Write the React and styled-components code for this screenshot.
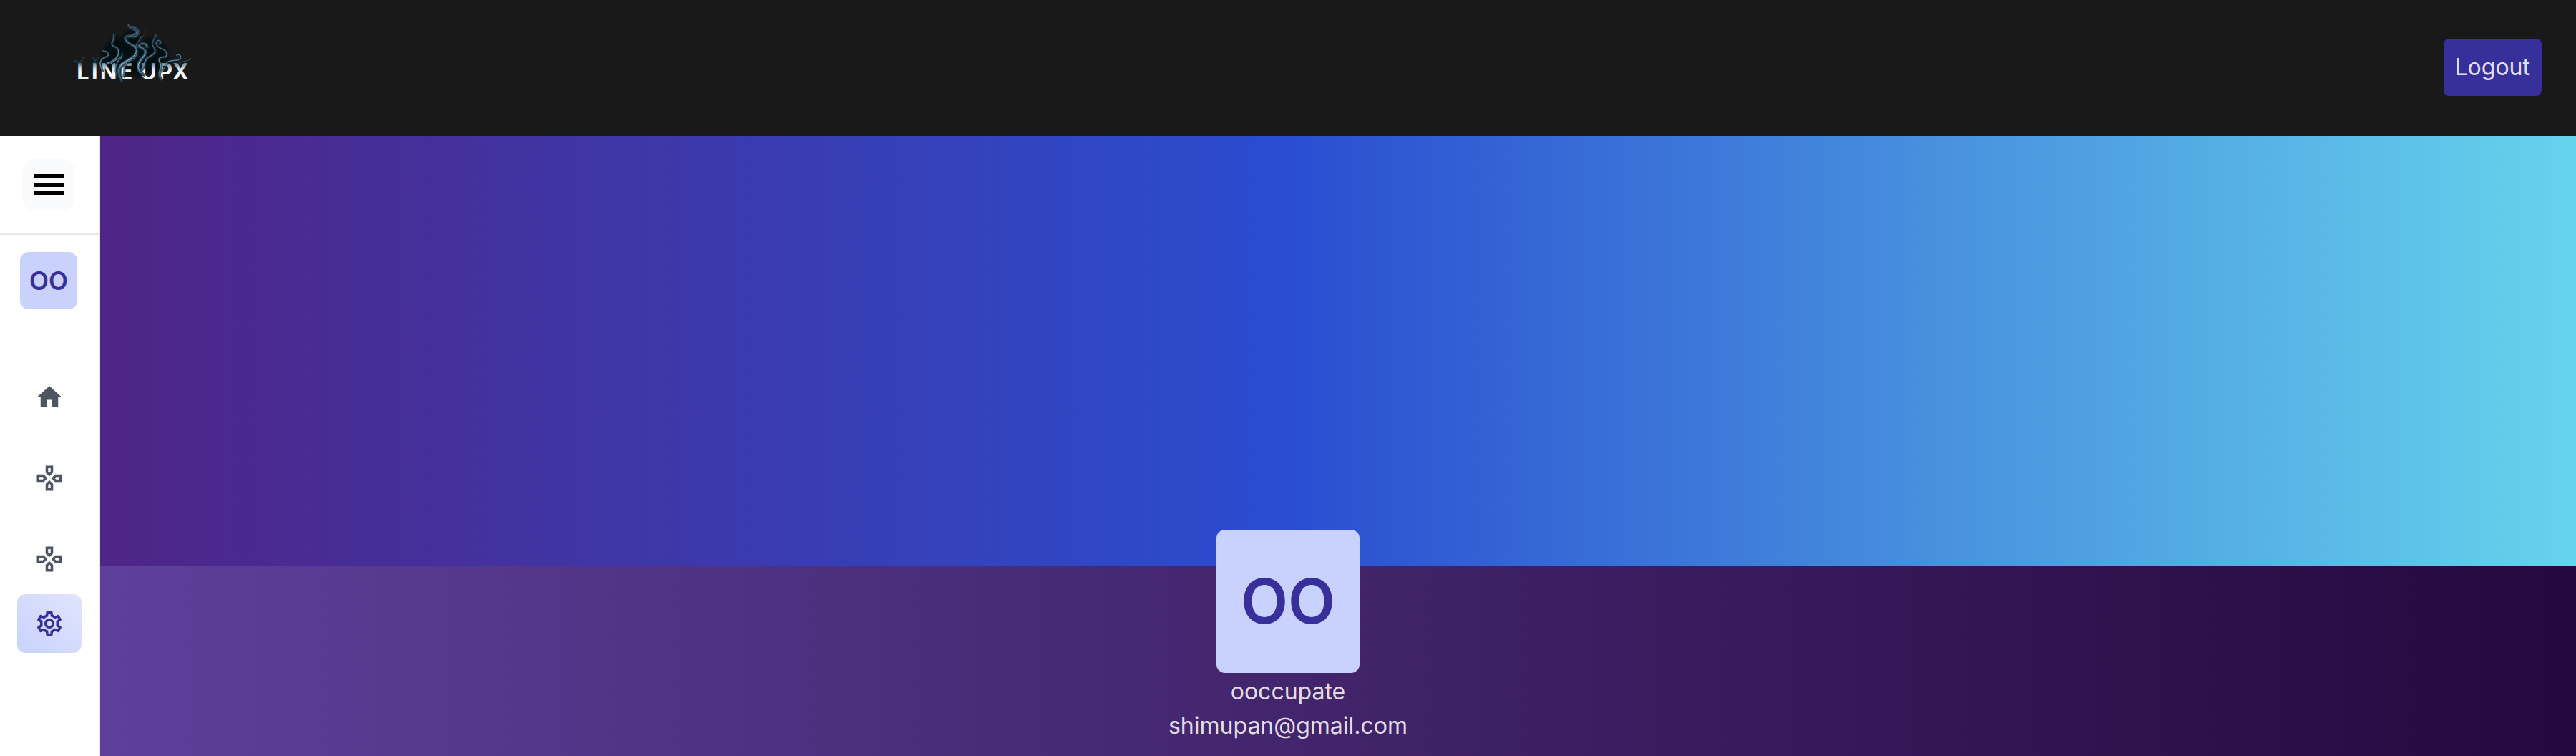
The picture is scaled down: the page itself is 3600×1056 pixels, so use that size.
import React from "react";
import styled, { createGlobalStyle } from "styled-components";
import { MdHome, MdOutlineGamepad, MdOutlineSettings } from "react-icons/md";

const GlobalStyle = createGlobalStyle`
  *, *::before, *::after { box-sizing: border-box; }
  body {
    margin: 0;
    background: #191919;
    color: rgba(255, 255, 255, 0.87);
    font-family: Inter, "Liberation Sans", sans-serif;
    font-size: 32px;
    line-height: 48px;
  }
`;

const Page = styled.div`
  display: flex;
  flex-direction: column;
  min-height: 100vh;
`;

const Header = styled.header`
  display: flex;
  align-items: center;
  justify-content: space-between;
  min-height: 190px;
  padding: 0 48px 0 90px;
  background: #191919;
`;

const LogoLink = styled.a`
  display: block;
  margin-bottom: 40px;
  svg { display: block; }
`;

const LogoutButton = styled.button`
  margin-bottom: 2px;
  padding: 16px;
  border: 0;
  border-radius: 8px;
  background: #37309b;
  color: rgba(255, 255, 255, 0.87);
  font: inherit;
  cursor: pointer;
`;

const Body = styled.div`
  position: relative;
  display: flex;
  flex: 1;
`;

/* The sidebar floats over the profile, which keeps the full page width. */
const Sidebar = styled.aside`
  position: absolute;
  inset: 0 auto 0 0;
  width: 140px;
  display: flex;
  flex-direction: column;
  background: #fff;
  border-right: 2px solid #e5e7eb;
`;

const SidebarTop = styled.div`
  display: flex;
  justify-content: center;
  padding: 32px 2px 32px 0;
  border-bottom: 2px solid #e5e7eb;
`;

const MenuButton = styled.button`
  display: flex;
  align-items: center;
  justify-content: center;
  width: 72px;
  height: 72px;
  padding: 0;
  border: 0;
  border-radius: 16px;
  background: #f9fafc;
  cursor: pointer;
`;

const SidebarUser = styled.div`
  display: flex;
  justify-content: center;
  padding: 24px 2px 82px 0;
`;

const Avatar = styled.div`
  display: flex;
  align-items: center;
  justify-content: center;
  width: ${(p) => (p.$large ? 200 : 80)}px;
  height: ${(p) => (p.$large ? 200 : 80)}px;
  border-radius: 12px;
  background: #c8d2fc;
  color: #37309b;
  font-size: ${(p) => (p.$large ? 86 : 35)}px;
  font-weight: 600;
  line-height: 1;
`;

const NavList = styled.nav`
  display: flex;
  flex-direction: column;
  gap: 31px;
  padding: 0 24px 8px;
`;

const NavFooter = styled.div`
  padding: 0 24px;
`;

const NavItem = styled.a`
  display: flex;
  align-items: center;
  justify-content: center;
  height: 82px;
  border-radius: 12px;
  color: ${(p) => (p.$active ? "#37309b" : "#4d5563")};
  background: ${(p) => (p.$active ? "linear-gradient(to top right, #c8d2fc, #e0e5fd)" : "transparent")};
`;

const Profile = styled.main`
  display: flex;
  flex-direction: column;
  flex: 1;
`;

const Banner = styled.div`
  height: 600px;
  background: linear-gradient(to right, #522180, #2a4dd0, #66d3ec);
`;

const Details = styled.section`
  display: flex;
  flex-direction: column;
  align-items: center;
  flex: 1;
  padding-bottom: 16px;
  background: linear-gradient(to right, #60429f, #42256c, #24083e);
`;

const Portrait = styled.div`
  margin: -50px 0 2px;
`;

const Line = styled.p`
  margin: 0;
`;

const wisps = [
  { d: "M240 278C226 252 222 228 240 210C262 190 304 180 302 148C298 124 262 128 256 104C248 82 304 96 302 74C298 58 272 62 268 44", w: 12 },
  { d: "M252 98C262 84 296 104 308 84C318 62 292 50 276 56", w: 9 },
  { d: "M246 262C252 224 246 206 274 194C304 182 308 160 302 140C292 122 318 114 322 92", w: 5 },
  { d: "M330 252C304 236 304 212 320 192C334 174 346 160 336 148C328 136 306 140 314 128C326 118 346 122 346 136", w: 12 },
  { d: "M322 232C342 210 330 190 358 176C388 162 382 146 370 132C364 116 378 104 382 86", w: 7 },
  { d: "M408 276C380 246 412 230 402 206C390 184 398 178 424 178C436 168 426 150 408 144C386 136 376 118 392 110C406 108 408 122 396 124", w: 7 },
  { d: "M180 205C212 196 236 170 224 146C212 128 190 138 202 112C210 96 204 94 208 84", w: 8 },
  { d: "M196 206C206 184 246 194 242 160", w: 5 },
  { d: "M158 236C150 214 146 204 156 188C176 174 190 178 182 162C176 150 164 158 162 152", w: 6 },
  { d: "M222 262C208 240 212 204 238 182", w: 5 },
  { d: "M404 240C430 228 414 206 440 196C460 190 488 198 488 178C486 166 474 168 470 172", w: 5 },
  { d: "M480 208C500 188 516 204 530 184", w: 3 },
  { d: "M64 210C58 194 76 198 80 180M60 204C52 190 46 198 40 196", w: 3 },
  { d: "M132 206C114 186 140 196 142 180M128 196L118 182", w: 3 },
  { d: "M322 108C328 90 336 84 342 68M366 124C372 96 384 100 388 80", w: 3 },
];

function Logo() {
  return (
    <svg width="200" height="110" viewBox="0 0 600 330" role="img" aria-label="Line UpX">
      <defs>
        <linearGradient id="smoke" gradientUnits="userSpaceOnUse" x1="0" y1="40" x2="0" y2="280">
          <stop offset="0" stopColor="#263c4b" />
          <stop offset="0.4" stopColor="#263f50" />
          <stop offset="0.7" stopColor="#34647f" />
          <stop offset="1" stopColor="#17394c" />
        </linearGradient>
        <linearGradient id="shine" gradientUnits="userSpaceOnUse" x1="0" y1="40" x2="0" y2="280">
          <stop offset="0" stopColor="#45606f" />
          <stop offset="0.45" stopColor="#7fa4b6" />
          <stop offset="0.7" stopColor="#9fd2ea" />
          <stop offset="1" stopColor="#3d6e87" />
        </linearGradient>
        <linearGradient id="letters" gradientUnits="userSpaceOnUse" x1="0" y1="200" x2="0" y2="274">
          <stop offset="0" stopColor="#527080" />
          <stop offset="0.4" stopColor="#dce9ef" />
          <stop offset="0.7" stopColor="#ffffff" />
          <stop offset="1" stopColor="#d8eef6" />
        </linearGradient>
        <filter id="haze" x="-20%" y="-20%" width="140%" height="140%">
          <feGaussianBlur stdDeviation="8" />
        </filter>
      </defs>
      <path
        d="M150 205L168 140L204 100L240 100L262 72L310 76L322 104L380 102L424 140L436 190L420 230L300 256L220 240Z"
        fill="#04080b"
        opacity="0.85"
        filter="url(#haze)"
      />
      <g fill="url(#letters)" fontFamily="Inter, 'Liberation Sans', sans-serif" fontSize="92" fontWeight="700">
        <text x="52 114 150 230" y="272">LINE</text>
        <text x="319 394 453" y="272">UPX</text>
      </g>
      <g fill="none" strokeLinecap="round" strokeLinejoin="round">
        {wisps.map((s) => (
          <g key={s.d}>
            <path d={s.d} stroke="#12222c" strokeWidth={s.w} opacity="0.7" transform="translate(5 3)" />
            <path d={s.d} stroke="url(#smoke)" strokeWidth={s.w} opacity="0.9" />
            {s.w > 4 && <path d={s.d} stroke="url(#shine)" strokeWidth={s.w / 4} />}
          </g>
        ))}
      </g>
    </svg>
  );
}

function MenuIcon() {
  return (
    <svg width="42" height="30" viewBox="0 0 42 30" aria-hidden="true">
      <path d="M0 0h42v6H0zM0 12h42v6H0zM0 24h42v6H0z" fill="#000" />
    </svg>
  );
}

export default function App() {
  return (
    <>
      <GlobalStyle />
      <Page>
        <Header>
          <LogoLink href="#home">
            <Logo />
          </LogoLink>
          <LogoutButton type="button">Logout</LogoutButton>
        </Header>
        <Body>
          <Profile>
            <Banner />
            <Details>
              <Portrait>
                <Avatar $large>OO</Avatar>
              </Portrait>
              <Line>ooccupate</Line>
              <Line>shimupan@gmail.com</Line>
            </Details>
          </Profile>
          <Sidebar>
            <SidebarTop>
              <MenuButton type="button" aria-label="Toggle menu">
                <MenuIcon />
              </MenuButton>
            </SidebarTop>
            <SidebarUser>
              <Avatar>OO</Avatar>
            </SidebarUser>
            <NavList aria-label="Main">
              <NavItem href="#home" aria-label="Home"><MdHome size={42} /></NavItem>
              <NavItem href="#games" aria-label="Games"><MdOutlineGamepad size={42} /></NavItem>
              <NavItem href="#lineups" aria-label="Lineups"><MdOutlineGamepad size={42} /></NavItem>
            </NavList>
            <NavFooter>
              <NavItem href="#settings" aria-label="Settings" aria-current="page" $active>
                <MdOutlineSettings size={42} />
              </NavItem>
            </NavFooter>
          </Sidebar>
        </Body>
      </Page>
    </>
  );
}
